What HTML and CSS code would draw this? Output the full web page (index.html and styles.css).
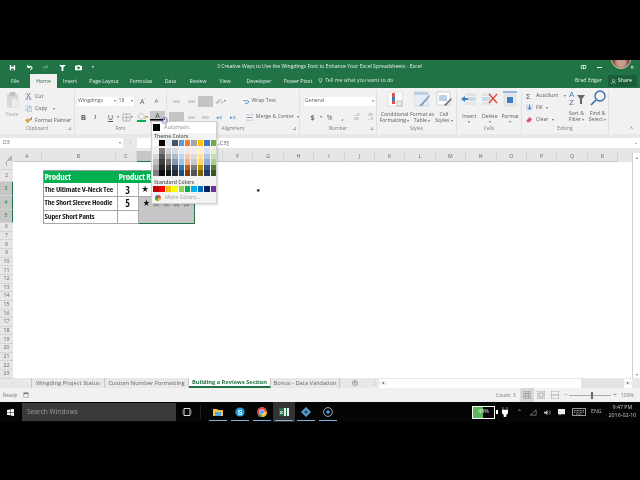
FILE: index.html
```html
<!DOCTYPE html>
<html lang="en">
<head>
<meta charset="utf-8">
<title>3 Creative Ways to Use the Wingdings Font to Enhance Your Excel Spreadsheets - Excel</title>
<link rel="stylesheet" href="styles.css">
</head>
<body>
<div class="letterbox"></div>
<div class="app">
  <header class="titlebar">
    <div class="qat">
      <svg class="qi" viewBox="0 0 8 8"><path d="M1 1h5l1 1v5H1z" fill="#fff"/><path d="M2.5 1h3v2h-3zM2.5 5h3v2h-3z" fill="#217346"/></svg>
      <svg class="qi" viewBox="0 0 8 8"><path d="M2 1v3h3M2 4c1-2 4-2 5 0 0 1-1 2-2 3" fill="none" stroke="#fff" stroke-width="1.2"/></svg>
      <svg class="qi dim" viewBox="0 0 8 8"><path d="M6 1v3H3M6 4C5 2 2 2 1 4c0 1 1 2 2 3" fill="none" stroke="#6fa587" stroke-width="1"/></svg>
      <svg class="qi" viewBox="0 0 8 8"><path d="M0 1h8L5 4v4H3V4z" fill="#fff"/></svg>
      <svg class="qi" viewBox="0 0 8 8"><path d="M0 2h2l1-1h2l1 1h2v5H0z" fill="#fff"/><circle cx="4" cy="4.4" r="1.5" fill="#217346"/></svg>
      <span class="qmore">▾</span>
    </div>
    <div class="doc-title">3 Creative Ways to Use the Wingdings Font to Enhance Your Excel Spreadsheets - Excel</div>
    <div class="winbtns">
      <svg class="wb" viewBox="0 0 8 8"><path d="M1 2h6v4H1zM4 2v4" fill="none" stroke="#fff"/></svg>
      <span class="wmin"></span>
      <span class="avatar"></span>
      <span class="wclose">✕</span>
    </div>
  </header>

  <nav class="tabs">
    <span class="tab">File</span>
    <span class="tab active">Home</span>
    <span class="tab">Insert</span>
    <span class="tab">Page Layout</span>
    <span class="tab">Formulas</span>
    <span class="tab">Data</span>
    <span class="tab">Review</span>
    <span class="tab">View</span>
    <span class="tab">Developer</span>
    <span class="tab">Power Pivot</span>
    <span class="tell">
      <svg class="bulb" viewBox="0 0 8 8"><circle cx="4" cy="3.2" r="2.6" fill="none" stroke="#fff" stroke-width=".8"/><path d="M3 7h2" stroke="#fff"/></svg>
      Tell me what you want to do
    </span>
    <span class="user">Brad Edgar</span>
    <span class="share">
      <svg class="bulb" viewBox="0 0 8 8"><circle cx="4" cy="2.5" r="1.8" fill="none" stroke="#fff" stroke-width=".8"/><path d="M1 8c0-4 6-4 6 0" fill="none" stroke="#fff" stroke-width=".8"/></svg>
      Share
    </span>
  </nav>

  <section class="ribbon">
    <div class="group g-clip">
      <div class="gbody clip-body">
        <div class="paste">
          <svg class="paste-ic" viewBox="0 0 14 18"><path d="M1 3h12v15H1z" fill="#d8d8d8"/><path d="M4 1h6v4H4z" fill="#bdbdbd"/><path d="M6 8h8v10H6z" fill="#ececec" stroke="#cfcfcf" stroke-width=".6"/></svg>
          <span class="muted">Paste</span>
        </div>
        <div class="clip-list">
          <span class="cl"><svg class="ci" viewBox="0 0 8 8"><path d="M2 0l4 6M6 0L2 6" stroke="#777" fill="none"/><circle cx="2" cy="7" r="1" fill="none" stroke="#3d7ebd" stroke-width=".6"/><circle cx="6" cy="7" r="1" fill="none" stroke="#3d7ebd" stroke-width=".6"/></svg>Cut</span>
          <span class="cl"><svg class="ci" viewBox="0 0 8 8"><path d="M0 0h5v6H0z" fill="#e8eef5" stroke="#8aa" stroke-width=".5"/><path d="M3 2h5v6H3z" fill="#d5e2f0" stroke="#8aa" stroke-width=".5"/></svg>Copy &nbsp;<span class="car">▾</span></span>
          <span class="cl"><svg class="ci" viewBox="0 0 8 8"><path d="M0 4l3-3 3 3-3 3z" fill="#e6a83c"/><path d="M5 3l3-3v2L6 4z" fill="#666"/></svg>Format Painter</span>
        </div>
      </div>
      <div class="glabel">Clipboard<i class="launch"></i></div>
    </div>

    <div class="group g-font">
      <div class="gbody stack">
        <div class="rowx font-row1">
          <span class="field fname">Wingdings<b class="car">▾</b></span>
          <span class="field fsize">18<b class="car">▾</b></span>
          <span class="bigA">A<sup>^</sup></span>
          <span class="smallA">A<sup>ˇ</sup></span>
        </div>
        <div class="rowx font-row2">
          <b class="fmt">B</b><i class="fmt it">I</i><u class="fmt und">U</u><span class="car">▾</span>
          <svg class="bord" viewBox="0 0 10 10"><path d="M1 1h8v8H1zM5 1v8M1 5h8" fill="none" stroke="#999" stroke-width=".7"/></svg><span class="car">▾</span>
          <span class="fill"><svg class="bucket" viewBox="0 0 8 6"><path d="M4 0l3 3-3 3-3-3z" fill="#f7f7f7" stroke="#999" stroke-width=".6"/><path d="M7 3v2" stroke="#e6a83c"/></svg></span><span class="car">▾</span>
          <span class="fcolor">A</span>
        </div>
      </div>
      <div class="glabel">Font</div>
    </div>

    <div class="group g-align">
      <div class="gbody stack">
        <div class="rowx al-row1">
          <span class="aic l3"></span><span class="aic l3"></span><span class="aic on"></span>
          <svg class="orient" viewBox="0 0 12 8"><path d="M1 7l5-6M3 7l5-6" stroke="#999" fill="none"/><path d="M8 6l3-2" stroke="#3d7ebd"/></svg><span class="car">▾</span>
          <svg class="wrap-ic" viewBox="0 0 8 8"><path d="M0 1h8v6H0z" fill="#fff"/><path d="M1 3h5c2 0 2 3 0 3H3" fill="none" stroke="#3d7ebd"/></svg>
          <span class="rtext">Wrap Text</span>
        </div>
        <div class="rowx al-row2">
          <span class="aic on"></span><span class="aic l3"></span><span class="aic l3"></span>
          <span class="indent">◂≡</span><span class="indent">▸≡</span>
          <svg class="wrap-ic" viewBox="0 0 8 8"><path d="M0 1h8v6H0z" fill="#fff" stroke="#888" stroke-width=".5"/><path d="M1 4h6" stroke="#3d7ebd"/></svg>
          <span class="rtext">Merge &amp; Center</span><span class="car">▾</span>
        </div>
      </div>
      <div class="glabel">Alignment<i class="launch"></i></div>
    </div>

    <div class="group g-num">
      <div class="gbody stack">
        <div class="rowx num-row1"><span class="field fgen">General<b class="car">▾</b></span></div>
        <div class="rowx num-row2">
          <b class="nsym">$</b><span class="car">▾</span><span class="nsym">%</span><b class="nsym">,</b>
          <span class="dec">←.0<br>.00</span><span class="dec">.00<br>→.0</span>
        </div>
      </div>
      <div class="glabel">Number<i class="launch"></i></div>
    </div>

    <div class="group g-styles">
      <div class="gbody trio">
        <div class="big bs1">
          <svg class="bigic" viewBox="0 0 16 16"><path d="M1 1h14v14H1z" fill="#fff" stroke="#ccc" stroke-width=".5"/><path d="M5 2h3v4H5z" fill="#d9534f"/><path d="M5 6h3v4H5z" fill="#3d7ebd"/><path d="M5 10h3v3H5z" fill="#d9534f"/><path d="M10 10h5v5h-5z" fill="#eee" stroke="#888" stroke-width=".5"/></svg>
          <span>Conditional</span><span>Formatting <b class="car">▾</b></span>
        </div>
        <div class="big bs2">
          <svg class="bigic" viewBox="0 0 16 16"><path d="M0 1h14v14H0z" fill="#e6eef7" stroke="#bbb" stroke-width=".5"/><path d="M0 1h14v3H0z" fill="#bcd0e6"/><path d="M5 15l10-11 1 1-8 10z" fill="#8a9fb6"/></svg>
          <span>Format as</span><span>Table <b class="car">▾</b></span>
        </div>
        <div class="big bs3">
          <svg class="bigic" viewBox="0 0 16 16"><path d="M1 1h13v13H1z" fill="#fff" stroke="#aaa" stroke-width=".5"/><path d="M3 4h8v6H3z" fill="#bcd0e6"/><path d="M8 14l7-7 1 1-6 7z" fill="#777"/></svg>
          <span>Cell</span><span>Styles <b class="car">▾</b></span>
        </div>
      </div>
      <div class="glabel">Styles</div>
    </div>

    <div class="group g-cells">
      <div class="gbody trio">
        <div class="big">
          <svg class="bigic" viewBox="0 0 16 16"><path d="M4 2h11v3H4zM4 11h11v3H4z" fill="#e4e4e4"/><path d="M7 6h8v4H7z" fill="#c8d9ec"/><path d="M0 8l4-3v2h3v2H4v2z" fill="#3d7ebd"/></svg>
          <span>Insert</span><b class="car">▾</b>
        </div>
        <div class="big">
          <svg class="bigic" viewBox="0 0 16 16"><path d="M0 2h11v3H0zM0 11h11v3H0z" fill="#e4e4e4"/><path d="M0 6h8v4H0z" fill="#c8d9ec"/><path d="M7 3l8 9M15 3l-8 9" stroke="#d9462f" stroke-width="1.3"/></svg>
          <span>Delete</span><b class="car">▾</b>
        </div>
        <div class="big">
          <svg class="bigic" viewBox="0 0 16 16"><path d="M2 3h12v12H2z" fill="#e8e8e8" stroke="#ccc" stroke-width=".5"/><path d="M5 6h6v6H5z" fill="#3d7ebd"/><path d="M1 1h14" stroke="#3d7ebd"/></svg>
          <span>Format</span><b class="car">▾</b>
        </div>
      </div>
      <div class="glabel">Cells</div>
    </div>

    <div class="group g-edit">
      <div class="gbody edit-body">
        <div class="edit-list">
          <span class="cl"><span class="sigma">Σ</span>AutoSum &nbsp;<b class="car">▾</b></span>
          <span class="cl"><svg class="ci" viewBox="0 0 8 8"><path d="M0 0h8v8H0z" fill="#d5e2f0"/><path d="M4 1v5M2 4l2 2 2-2" stroke="#2f6ca8" fill="none"/></svg>Fill <b class="car">▾</b></span>
          <span class="cl"><svg class="ci" viewBox="0 0 8 8"><path d="M0 6l4-5 3 3-3 3H2z" fill="#e0507a"/></svg>Clear <b class="car">▾</b></span>
        </div>
        <div class="big sm">
          <svg class="bigic" viewBox="0 0 16 16"><text x="0" y="7" class="az a1">A</text><text x="0" y="15" class="az a2">Z</text><path d="M8 5h8l-3 4v5h-2V9z" fill="#666"/></svg>
          <span>Sort &amp;</span><span>Filter <b class="car">▾</b></span>
        </div>
        <div class="big sm">
          <svg class="bigic" viewBox="0 0 16 16"><circle cx="10" cy="6" r="5" fill="none" stroke="#2f6ca8" stroke-width="1.3"/><path d="M6 10l-5 5" stroke="#2f6ca8" stroke-width="1.6"/></svg>
          <span>Find &amp;</span><span>Select <b class="car">▾</b></span>
        </div>
      </div>
      <div class="glabel">Editing</div>
    </div>
    <div class="collapse">^</div>
  </section>

  <div class="formula">
    <span class="namebox">D3<b class="car">▾</b></span>
    <span class="fdots">⋮</span>
    <span class="ftext">,C3]</span>
    <span class="fexp">⌄</span>
  </div>

  <div class="colhead">
    <span class="corner"></span>
    <span class="ch ca">A</span><span class="ch cb">B</span><span class="ch cc">C</span><span class="ch cd sel"></span><span class="ch ce"></span>
    <span class="ch">F</span><span class="ch">G</span><span class="ch">H</span><span class="ch">I</span><span class="ch">J</span><span class="ch">K</span><span class="ch">L</span><span class="ch">M</span><span class="ch">N</span><span class="ch">O</span><span class="ch">P</span><span class="ch">Q</span><span class="ch">R</span>
    <span class="ch tail"></span>
  </div>

  <div class="sheet">
    <div class="rownums">
      <span class="rn">1</span><span class="rn r2">2</span><span class="rn r3 sel">3</span><span class="rn r4 sel">4</span><span class="rn r5 sel">5</span>
      <span class="rn">6</span><span class="rn">7</span><span class="rn">8</span><span class="rn">9</span><span class="rn">10</span><span class="rn">11</span><span class="rn">12</span><span class="rn">13</span><span class="rn">14</span><span class="rn">15</span><span class="rn">16</span><span class="rn">17</span><span class="rn">18</span><span class="rn">19</span><span class="rn">20</span><span class="rn">21</span><span class="rn">22</span><span class="rn">23</span>
    </div>
    <div class="canvas">
      <div class="table">
        <div class="c hd pn">Product</div><div class="c hd pr">Product Ra</div><div class="c hd st"></div>
        <div class="c pn">The Ultimate V-Neck Tee</div><div class="c num">3</div><div class="c st">★</div>
        <div class="c pn">The Short Sleeve Hoodie</div><div class="c num">5</div>
        <div class="c st gray">
          <span class="star">★</span>
          <svg class="hollow" viewBox="0 0 10 10"><path d="M5 .8l1.2 3h3.2L6.8 5.8l1 3.2L5 7.1 2.2 9l1-3.2L.6 3.8h3.2z" fill="none" stroke="#666" stroke-width=".8"/></svg>
          <svg class="hollow" viewBox="0 0 10 10"><path d="M5 .8l1.2 3h3.2L6.8 5.8l1 3.2L5 7.1 2.2 9l1-3.2L.6 3.8h3.2z" fill="none" stroke="#666" stroke-width=".8"/></svg>
          <svg class="hollow" viewBox="0 0 10 10"><path d="M5 .8l1.2 3h3.2L6.8 5.8l1 3.2L5 7.1 2.2 9l1-3.2L.6 3.8h3.2z" fill="none" stroke="#666" stroke-width=".8"/></svg>
          <svg class="hollow" viewBox="0 0 10 10"><path d="M5 .8l1.2 3h3.2L6.8 5.8l1 3.2L5 7.1 2.2 9l1-3.2L.6 3.8h3.2z" fill="none" stroke="#666" stroke-width=".8"/></svg>
        </div>
        <div class="c pn">Super Short Pants</div><div class="c num"></div><div class="c st gray last"></div>
      </div>
      <span class="tinystar">★</span>
    </div>
    <div class="vscroll"><span class="va">▴</span><span class="va">▾</span></div>
  </div>

  <div class="sheettabs">
    <span class="nav">‹ &nbsp;›</span>
    <span class="stab s1">Wingding Project Status</span>
    <span class="stab s2">Custom Number Formatting</span>
    <span class="stab s3 cur">Building a Reviews Section</span>
    <span class="stab s4">Bonus - Data Validation</span>
    <span class="plus">+</span>
    <span class="hdots">⋮</span>
    <span class="hscroll"><b class="ha">◂</b><i class="hthumb"></i><b class="ha">▸</b></span>
  </div>

  <div class="status">
    <span class="ready">Ready</span>
    <svg class="rec" viewBox="0 0 8 8"><path d="M1 1h6v6H1z" fill="#fff" stroke="#777" stroke-width=".7"/><path d="M1 1h6v2H1z" fill="#777"/></svg>
    <span class="count">Count: 3</span>
    <span class="view on"><svg viewBox="0 0 8 8"><path d="M0 0h8v8H0zM2.7 0v8M5.3 0v8M0 2.7h8M0 5.3h8" fill="none" stroke="#8a8a8a" stroke-width=".6"/></svg></span>
    <span class="view"><svg viewBox="0 0 8 8"><path d="M0 0h8v8H0zM2 2h4v4H2z" fill="none" stroke="#8a8a8a" stroke-width=".7"/></svg></span>
    <span class="view"><svg viewBox="0 0 8 8"><path d="M0 0h8v8H0zM0 4h8" fill="none" stroke="#8a8a8a" stroke-width=".7"/></svg></span>
    <span class="zm">−</span>
    <span class="slider"><i></i></span>
    <span class="zm">+</span>
    <span class="pct">100%</span>
  </div>

  <footer class="taskbar">
    <svg class="winlogo" viewBox="0 0 8 8"><path d="M0 1l3.5-.5v3H0zM4 .4L8 0v3.5H4zM0 4h3.5v3L0 6.6zM4 4h4v4l-4-.5z" fill="#fff"/></svg>
    <span class="search">Search Windows</span>
    <svg class="taskview" viewBox="0 0 10 8"><path d="M2 .5h6v7H2z" fill="none" stroke="#ddd"/><path d="M0 2v4M10 2v4" stroke="#888"/></svg>
    <span class="tbsep"></span>
    <span class="app-ic run"><svg viewBox="0 0 10 10"><path d="M0 2h4l1 1h5v6H0z" fill="#f4c24b"/><path d="M2 5h6v4H2z" fill="#5aa7e0"/></svg></span>
    <span class="app-ic run"><svg viewBox="0 0 10 10"><circle cx="5" cy="5" r="4.6" fill="#1d9fe0"/><text x="5" y="7.5" class="sky">S</text></svg></span>
    <span class="app-ic run"><svg viewBox="0 0 10 10"><circle cx="5" cy="5" r="5" fill="#dd4b3e"/><path d="M5 5L1 9c1 1 3 1 4 1z" fill="#3aa757"/><path d="M5 5l5 0c0 3-2 5-5 5z" fill="#f6c026"/><circle cx="5" cy="5" r="2.3" fill="#4a8af4" stroke="#fff" stroke-width=".7"/></svg></span>
    <span class="app-ic run act"><svg viewBox="0 0 10 10"><path d="M0 1h5v8H0z" fill="#1e7145"/><path d="M5 1h5v8H5z" fill="#eee"/><path d="M7.5 1v8" stroke="#1e7145"/><text x="2.5" y="7" class="xl">x</text></svg></span>
    <span class="app-ic run"><svg viewBox="0 0 10 10"><path d="M5 0l5 5-5 5-5-5z" fill="#5a9bc9"/><path d="M5 3l2 2-2 2-2-2z" fill="#204a6a"/></svg></span>
    <span class="app-ic run"><svg viewBox="0 0 10 10"><circle cx="5" cy="5" r="4.4" fill="none" stroke="#c8d8e6" stroke-width=".8"/><circle cx="5" cy="5" r="1.7" fill="#3fa5f5"/></svg></span>
    <div class="tray">
      <span class="battery"><i class="level"></i><span class="bt">49%</span></span>
      <svg class="plug" viewBox="0 0 6 10"><path d="M1 0v3M5 0v3M0 3h6v3L4 8v2H2V8L0 6z" fill="#fff" stroke="#fff" stroke-width=".5"/></svg>
      <span class="ti chev">⌃</span>
      <svg class="ti-s" viewBox="0 0 8 8"><path d="M0 7l7-6v6z" fill="none" stroke="#aaa" stroke-width=".7"/></svg>
      <svg class="ti-s" viewBox="0 0 8 8"><path d="M0 3h2l2-2v6L2 5H0z" fill="#ccc"/><path d="M5.5 2.5c1 1 1 2 0 3M6.8 1.5c1.6 1.6 1.6 3.4 0 5" fill="none" stroke="#ccc" stroke-width=".6"/></svg>
      <svg class="ti-s" viewBox="0 0 8 8"><path d="M0 0h8v6H3L2 8V6H0z" fill="#eee"/></svg>
      <svg class="kbd" viewBox="0 0 14 8"><path d="M.5.5h13v7H.5z" fill="none" stroke="#ddd" stroke-width=".7"/><path d="M2 2.5h10M2 4.2h10M4 6h6" stroke="#ddd" stroke-width=".7" stroke-dasharray="1 .5"/></svg>
      <span class="eng">ENG</span>
      <span class="clock"><span>9:47 PM</span><span>2016-02-10</span></span>
    </div>
  </footer>

  <div class="popup">
    <div class="auto"><i class="autoswatch"></i><span>Automatic</span></div>
    <div class="pophead">Theme Colors</div>
    <div class="palette top">
      <i class="w"></i><i class="k"></i><i class="lg"></i><i class="dk"></i><i class="bl"></i><i class="or"></i><i class="gy"></i><i class="ye"></i><i class="ib"></i><i class="gn"></i>
    </div>
    <div class="palette shades">
      <i class="sw"></i><i class="sk"></i><i class="slg"></i><i class="sdk"></i><i class="sbl"></i><i class="sor"></i><i class="sgy"></i><i class="sye"></i><i class="sib"></i><i class="sgn"></i>
    </div>
    <div class="pophead std">Standard Colors</div>
    <div class="palette stdrow">
      <i class="c1"></i><i class="c2"></i><i class="c3"></i><i class="c4"></i><i class="c5"></i><i class="c6"></i><i class="c7"></i><i class="c8"></i><i class="c9"></i><i class="c10"></i>
    </div>
    <div class="more"><svg class="wheel" viewBox="0 0 8 8"><path d="M4 4V0a4 4 0 0 1 4 4z" fill="#e0504a"/><path d="M4 4h4a4 4 0 0 1-4 4z" fill="#f2b233"/><path d="M4 4v4a4 4 0 0 1-4-4z" fill="#4fa84f"/><path d="M4 4H0a4 4 0 0 1 4-4z" fill="#3d7ebd"/></svg><span>More Colors...</span></div>
  </div>
  <svg class="pointer" viewBox="0 0 12 12"><circle cx="5" cy="5" r="3.6" fill="none" stroke="#4a4ac8" stroke-width=".9"/><path d="M3 3v7l2-1.6 1.4 2.6 1-.5L6 8h2.4z" fill="#fff" stroke="#555" stroke-width=".5"/></svg>
</div>
</body>
</html>
```

FILE: styles.css
```css
* { box-sizing: border-box; }
html, body { margin: 0; height: 100%; background: #000; }
body {
  width: 640px; height: 480px; overflow: hidden;
  font-family: "Open Sans", "Noto Sans", sans-serif;
  font-size: 5.2px; line-height: 1; color: #5c5c5c;
}
.letterbox { height: 60px; background: #000; }
.app { position: relative; width: 640px; height: 362px; background: #f1f1f1; filter: blur(.3px); }
.app svg { display: block; }

/* title bar */
.titlebar { height: 14px; background: #217346; color: #e8f1ec; display: flex; align-items: center; overflow: hidden; position: relative; font-size: 5.1px; }
.qat { display: flex; align-items: center; width: 217px; padding-left: 9px; gap: 9.5px; flex: none; }
.qi { width: 7px; height: 7px; }
.qmore { font-size: 4px; color: #cfe; }
.doc-title { flex: 1; white-space: nowrap; }
.winbtns { display: flex; align-items: center; width: 66px; height: 14px; padding-left: 6px; position: relative; flex: none; }
.wb { width: 7px; height: 6px; }
.wmin { width: 5px; height: 1px; background: #fff; margin-left: 10px; }
.avatar { width: 20px; height: 20px; flex: none; border-radius: 50%; background: radial-gradient(circle at 50% 70%, #c79c8a 0 25%, #7b3d33 50%, #4a2a25); margin-left: 9px; margin-top: -16px; border: 1px solid #e8c9b8; }
.wclose { color: #fff; font-size: 5px; margin-left: -1px; }

/* tabs */
.tabs { height: 14px; background: #217346; color: #e4efe9; display: grid; grid-template-columns: 30px 27px 26px 42px 32px 27px 28px 26px 42px 36px 259px 33px 29px 1fr; align-items: center; }
.tab { text-align: center; height: 14px; line-height: 14px; white-space: nowrap; }
.tab.active { background: #f1f1f1; color: #217346; }
.tell { display: flex; align-items: center; gap: 2px; padding-left: 2px; white-space: nowrap; color: #d6e6dd; }
.bulb { width: 5px; height: 5px; }
.user { white-space: nowrap; }
.share { display: flex; align-items: center; gap: 2px; height: 12px; background: #1b5f3a; padding-left: 3px; white-space: nowrap; color: #fff; }

/* ribbon */
.ribbon { height: 46px; display: flex; background: #f1f1f1; padding-top: 2px; }
.group { display: flex; flex-direction: column; border-right: 1px solid #e0e0e0; height: 44px; flex: none; }
.g-clip { width: 75px; } .g-font { width: 92px; } .g-align { width: 133px; } .g-num { width: 77px; }
.g-styles { width: 80px; } .g-cells { width: 65px; } .g-edit { width: 87px; }
.gbody { height: 36px; }
.glabel { height: 8px; text-align: center; color: #7c7c7c; font-size: 4.8px; position: relative; }
.launch { position: absolute; right: 3px; top: 1px; width: 3px; height: 3px; border-right: 1px solid #aaa; border-bottom: 1px solid #aaa; }
.car { font-size: 3.5px; color: #777; font-weight: 400; }
.muted { color: #aaa; font-size: 5px; }

.clip-body { display: flex; padding: 1px 0 0 6px; gap: 7px; }
.paste { display: flex; flex-direction: column; align-items: center; gap: 4px; width: 12px; }
.paste-ic { width: 13px; height: 17px; }
.clip-list, .edit-list { display: flex; flex-direction: column; gap: 5px; padding-top: 2px; white-space: nowrap; }
.cl { display: flex; align-items: center; gap: 3px; height: 7px; }
.ci { width: 7px; height: 7px; }

.stack { display: flex; flex-direction: column; }
.rowx { display: flex; align-items: center; white-space: nowrap; }
.font-row1 { height: 14px; padding-left: 2px; gap: 1px; margin-top: 4px; }
.field { background: #fff; height: 9px; display: flex; align-items: center; justify-content: space-between; padding: 0 1px; }
.fname { width: 41px; } .fsize { width: 17px; }
.bigA { font-size: 7px; margin-left: 5px; width: 14px; color: #666; }
.smallA { font-size: 6px; width: 12px; color: #666; }
sup { font-size: 3px; vertical-align: top; color: #3d7ebd; }
.font-row2 { height: 12px; padding-left: 6px; margin-top: 3px; color: #555; }
.fmt { font-size: 7px; width: 13px; font-family: "Liberation Sans", sans-serif; }
.fmt.it { font-family: "Liberation Serif", serif; width: 14px; }
.fmt.und { width: 9px; }
.bord { width: 9px; height: 9px; margin-left: 3px; }
.fill { width: 9px; height: 9px; margin-left: 4px; border-bottom: 2px solid #00b050; }
.bucket { width: 9px; height: 7px; }
.fcolor { width: 15px; height: 12px; background: #c6c6c6; margin-left: 2px; font-size: 7px; color: #444; text-align: center; line-height: 9px; box-shadow: inset 0 -2.5px 0 #c6c6c6, inset 0 -4px 0 #000; }

.al-row1 { height: 12px; margin-top: 5px; padding-left: 2px; }
.al-row2 { height: 12px; margin-top: 4px; padding-left: 2px; }
.aic { width: 14.5px; height: 11px; position: relative; flex: none; }
.aic.l3::after { content: ""; position: absolute; left: 4px; top: 4px; width: 7px; height: 3px; background: #d2d2d2; }
.aic.on { background: #c4c4c4; }
.orient { width: 9px; height: 7px; margin-left: 2px; }
.wrap-ic { width: 7px; height: 7px; margin: 0 3px 0 16px; flex: none; }
.al-row2 .wrap-ic { margin-left: 6px; }
.rtext { color: #666; }
.al-row2 .rtext { margin-right: 3px; }
.indent { width: 14px; text-align: center; color: #3d7ebd; font-size: 5px; }

.num-row1 { height: 14px; padding-left: 4px; margin-top: 4px; }
.fgen { width: 71px; }
.num-row2 { height: 12px; margin-top: 3px; padding-left: 7px; gap: 2px; }
.nsym { font-size: 7px; width: 12px; text-align: center; color: #666; }
.dec { width: 13px; font-size: 3.5px; line-height: 1.1; text-align: center; color: #777; }

.trio { display: flex; padding: 1px 0 0 2px; }
.big { display: flex; flex-direction: column; align-items: center; white-space: nowrap; gap: 1.5px; width: 20px; text-align: center; }
.bs1 { width: 31px; } .bs2 { width: 24px; } .bs3 { width: 20px; }
.bigic { width: 16px; height: 16px; margin-bottom: 3px; }
.g-cells .trio { padding-left: 2px; }
.g-cells .big { width: 20.5px; }
.g-cells .bigic { margin-bottom: 5px; }
.edit-body { display: flex; padding-left: 4px; }
.edit-list { width: 42px; }
.big.sm { width: 22px; }
.sigma { font-size: 8px; width: 7px; color: #555; }
.az { font-size: 8px; font-family: "Liberation Sans", sans-serif; font-weight: 400; }
.a1 { fill: #3d7ebd; } .a2 { fill: #8a4fb6; }
.collapse { flex: 1; text-align: center; padding-top: 36px; padding-left: 14px; color: #666; font-size: 5px; }

/* formula bar */
.formula { height: 17px; display: flex; align-items: flex-start; padding-top: 4px; background: #e8e8e8; }
.namebox { width: 123px; height: 10px; background: #fff; display: flex; align-items: center; justify-content: space-between; padding: 0 2px 0 3px; color: #666; }
.fdots { width: 14px; text-align: center; color: #aaa; line-height: 10px; }
.ftext { flex: 1; height: 10px; background: #fff; padding-left: 81px; line-height: 10px; color: #555; font-size: 6px; }
.fexp { width: 8px; background: #fff; height: 10px; color: #666; font-size: 5px; line-height: 8px; text-align: center; }

/* column headers */
.colhead { background: #e6e6e6; display: grid; grid-template-columns: 13px 29px 74px 21px 56px 30px repeat(13, 30.4px) 1fr; height: 10px; }
.corner { position: relative; overflow: hidden; }
.corner::after { content: ""; position: absolute; right: 1px; bottom: 1px; border: 3.5px solid; border-color: transparent #b5b5b5 #b5b5b5 transparent; }
.ch { text-align: center; line-height: 10px; border-right: 1px solid #d4d4d4; border-bottom: 1px solid #c8c8c8; color: #666; }
.ch.sel { background: #c6c6c6; border-bottom: 1px solid #217346; color: #217346; }
.ch.tail { background: #e6e6e6; border: 0; }

/* sheet */
.sheet { display: flex; height: 217px; background: #fff; }
.rownums { width: 13px; flex: none; background: #e6e6e6; display: flex; flex-direction: column; }
.rn { height: 8.65px; flex: none; text-align: center; color: #666; border-bottom: 1px solid #d4d4d4; display: flex; align-items: center; justify-content: center; }
.r2 { height: 12.5px; }
.r3 { height: 14px; } .r4 { height: 13.5px; } .r5 { height: 13.5px; }
.rn.sel { background: #c6c6c6; color: #217346; border-right: 1px solid #217346; }
.canvas { flex: 1; position: relative; padding: 8.5px 0 0 29.5px; }
.table { display: grid; grid-template-columns: 74px 21px 56px; grid-template-rows: 12.5px 14px 13.5px 13.5px; width: 151px; border: 1px solid #9c9c9c; border-width: 1px 0 0 1px; font-family: "Open Sans", sans-serif; font-weight: 700; font-stretch: condensed; color: #1a1a1a; background: #fff; }
.c { border-right: 1px solid #a8a8a8; border-bottom: 1px solid #a8a8a8; display: flex; align-items: center; white-space: nowrap; font-size: 7.7px; letter-spacing: -.15px; padding-left: 1px; }
.hd { background: #00b050; color: #fff; font-size: 9px; border-color: #00b050; }
.pr { z-index: 1; }
.num { justify-content: center; font-size: 10px; padding: 0; }
.st { font-family: "DejaVu Sans", sans-serif; font-size: 9px; padding-left: 3px; letter-spacing: 0; color: #111; }
.gray { background: #c6c6c6; border-right-color: #217346; border-bottom-color: #c6c6c6; }
.gray.last { border-bottom-color: #217346; }
.star { width: 10px; text-align: center; flex: none; }
.hollow { width: 7px; height: 7px; margin: 0 1.5px; flex: none; }
.tinystar { position: absolute; left: 243px; top: 27px; font-family: "DejaVu Sans", sans-serif; font-size: 5px; color: #000; }
.vscroll { width: 8px; flex: none; background: #fff; border-left: 1px solid #d0d0d0; display: flex; flex-direction: column; justify-content: space-between; align-items: center; color: #777; margin-top: -8px; font-size: 4px; padding: 3px 0 1px; position: relative; }

/* sheet tabs */
.sheettabs { height: 10px; background: #e8e8e8; display: grid; grid-template-columns: 32px 73px 84px 82px 69px 30px 9px 1fr; align-items: center; color: #666; white-space: nowrap; }
.nav { color: #bbb; padding-left: 7px; border-right: 1px solid #c8c8c8; height: 10px; line-height: 10px; }
.stab { border-right: 1px solid #c8c8c8; height: 10px; line-height: 10px; text-align: center; font-size: 5.8px; overflow: hidden; }
.stab.cur { background: #fff; color: #217346; font-weight: 700; font-size: 5.7px; border-bottom: 2px solid #217346; line-height: 9px; }
.plus { width: 6px; height: 6px; border: 1px solid #999; border-radius: 50%; font-size: 5px; line-height: 4px; text-align: center; margin-left: 12px; }
.hdots { color: #888; text-align: center; }
.hscroll { display: flex; align-items: center; height: 9px; background: #fff; margin-right: 8px; color: #555; font-size: 4px; }
.ha { width: 8px; text-align: center; background: #f0f0f0; font-weight: 400; }
.hthumb { flex: 1; height: 9px; background: linear-gradient(90deg, #fff 0 82%, #e4e4e4 82%); }

/* status */
.status { height: 14px; background: #f1f1f1; display: flex; align-items: center; color: #777; font-size: 5px; }
.ready { margin-left: 3px; width: 20px; }
.rec { width: 6px; height: 6px; flex: none; }
.count { margin-left: 467px; width: 24px; }
.view { width: 14px; height: 14px; display: flex; align-items: center; justify-content: center; flex: none; }
.view.on { background: #d8d8d8; }
.view svg { width: 8px; height: 8px; }
.zm { width: 6px; text-align: center; margin-left: 1px; font-size: 6px; flex: none; }
.slider { width: 42px; height: 1px; background: #aaa; position: relative; flex: none; }
.slider i { position: absolute; left: 22px; top: -3px; width: 2px; height: 7px; background: #666; }
.pct { margin-left: 3px; }

/* taskbar */
.taskbar { height: 20px; background: #050505; display: flex; align-items: center; position: relative; color: #ccc; }
.winlogo { width: 7px; height: 7px; margin-left: 7px; flex: none; }
.search { width: 154px; height: 18px; margin-left: 8px; background: #3a3a3a; color: #9c9c9c; font-size: 6.6px; line-height: 18px; padding-left: 5px; flex: none; }
.taskview { width: 10px; height: 8px; margin-left: 6px; flex: none; }
.tbsep { width: 1px; height: 14px; background: #222; margin: 0 5.5px 0 8px; flex: none; }
.app-ic { width: 22px; height: 20px; display: flex; align-items: center; justify-content: center; flex: none; position: relative; }
.app-ic svg { width: 10px; height: 10px; }
.app-ic.run::after { content: ""; position: absolute; left: 2px; right: 2px; bottom: 1px; height: 1px; background: #7fb4e0; }
.app-ic.act { background: #333; }
.sky { font-size: 7px; fill: #fff; text-anchor: middle; font-family: "Liberation Sans", sans-serif; font-weight: 700; }
.xl { font-size: 6px; fill: #fff; text-anchor: middle; font-family: "Liberation Sans", sans-serif; font-weight: 700; }
.tray { position: absolute; left: 472px; top: 0; height: 20px; width: 168px; display: flex; align-items: center; }
.battery { width: 23px; height: 13px; border: 1.5px solid #fff; position: relative; display: block; flex: none; }
.battery::after { content: ""; position: absolute; right: -3.5px; top: 3px; width: 2px; height: 4px; background: #fff; }
.level { position: absolute; left: 0; top: 0; bottom: 0; width: 10px; background: #5cb85c; }
.bt { position: absolute; left: 5px; top: 2.5px; color: #eee; font-size: 5.5px; }
.plug { width: 6px; height: 10px; margin-left: 7px; flex: none; }
.ti { color: #bbb; font-size: 6px; flex: none; }
.chev { margin-left: 9px; width: 6px; }
.ti-s { width: 7px; height: 7px; margin-left: 7px; flex: none; }
.kbd { width: 14px; height: 8px; margin-left: 7px; flex: none; }
.eng { margin-left: 5px; color: #bbb; font-size: 5.2px; }
.clock { display: flex; flex-direction: column; align-items: center; gap: 2.5px; margin-left: 7px; color: #ccc; font-size: 5.3px; white-space: nowrap; }

/* colour popup */
.popup { position: absolute; left: 151px; top: 61px; width: 66px; height: 83px; background: #f3f3f3; border: 1px solid #d0d0d0; box-shadow: 1px 1px 2px rgba(0,0,0,.15); z-index: 5; color: #666; }
.auto { height: 11px; background: #fff; display: flex; align-items: center; gap: 4px; padding-left: 1px; font-size: 5.4px; color: #888; }
.autoswatch { width: 7px; height: 7px; background: #000; flex: none; }
.pophead { height: 6px; padding-left: 2px; line-height: 6px; color: #555; font-weight: 600; font-size: 5.2px; }
.palette { display: grid; grid-template-columns: repeat(10, 5.5px); column-gap: .9px; margin-left: 1px; }
.top { height: 6px; margin-top: 1px; }
.shades { height: 28px; margin-top: 2px; }
.std { margin-top: 3px; }
.stdrow { height: 6px; margin-top: 1px; }
.w { background: #fff; } .k { background: #000; } .lg { background: #e7e6e6; } .dk { background: #44546a; } .bl { background: #5b9bd5; } .or { background: #ed7d31; } .gy { background: #a5a5a5; } .ye { background: #ffc000; } .ib { background: #4472c4; } .gn { background: #70ad47; }
.sw { background: linear-gradient(#f2f2f2 20%, #d9d9d9 20% 40%, #bfbfbf 40% 60%, #a6a6a6 60% 80%, #7f7f7f 80%); }
.sk { background: linear-gradient(#7f7f7f 20%, #595959 20% 40%, #3f3f3f 40% 60%, #262626 60% 80%, #0d0d0d 80%); }
.slg { background: linear-gradient(#d0cece 20%, #aeabab 20% 40%, #757070 40% 60%, #3a3838 60% 80%, #171616 80%); }
.sdk { background: linear-gradient(#d6dce4 20%, #acb9ca 20% 40%, #8497b0 40% 60%, #333f4f 60% 80%, #222a35 80%); }
.sbl { background: linear-gradient(#deeaf6 20%, #bdd7ee 20% 40%, #9dc3e6 40% 60%, #2e75b5 60% 80%, #1e4e79 80%); }
.sor { background: linear-gradient(#fbe5d5 20%, #f7cbac 20% 40%, #f4b183 40% 60%, #c55a11 60% 80%, #833c0b 80%); }
.sgy { background: linear-gradient(#ededed 20%, #dbdbdb 20% 40%, #c9c9c9 40% 60%, #7b7b7b 60% 80%, #525252 80%); }
.sye { background: linear-gradient(#fff2cc 20%, #fee599 20% 40%, #ffd965 40% 60%, #bf9000 60% 80%, #7f6000 80%); }
.sib { background: linear-gradient(#d9e2f3 20%, #b4c6e7 20% 40%, #8eaadb 40% 60%, #2f5496 60% 80%, #1f3864 80%); }
.sgn { background: linear-gradient(#e2efd9 20%, #c5e0b3 20% 40%, #a8d08d 40% 60%, #538135 60% 80%, #375623 80%); }
.c1 { background: #c00000; } .c2 { background: #ff0000; } .c3 { background: #ffc000; } .c4 { background: #ffff00; } .c5 { background: #92d050; } .c6 { background: #00b050; } .c7 { background: #00b0f0; } .c8 { background: #0070c0; } .c9 { background: #002060; } .c10 { background: #7030a0; }
.more { display: flex; align-items: center; gap: 4px; padding: 3px 0 0 3px; color: #999; font-size: 5.4px; }
.wheel { width: 6px; height: 6px; }
.pointer { position: absolute; left: 161px; top: 56px; width: 9px; height: 10px; z-index: 6; }
```
